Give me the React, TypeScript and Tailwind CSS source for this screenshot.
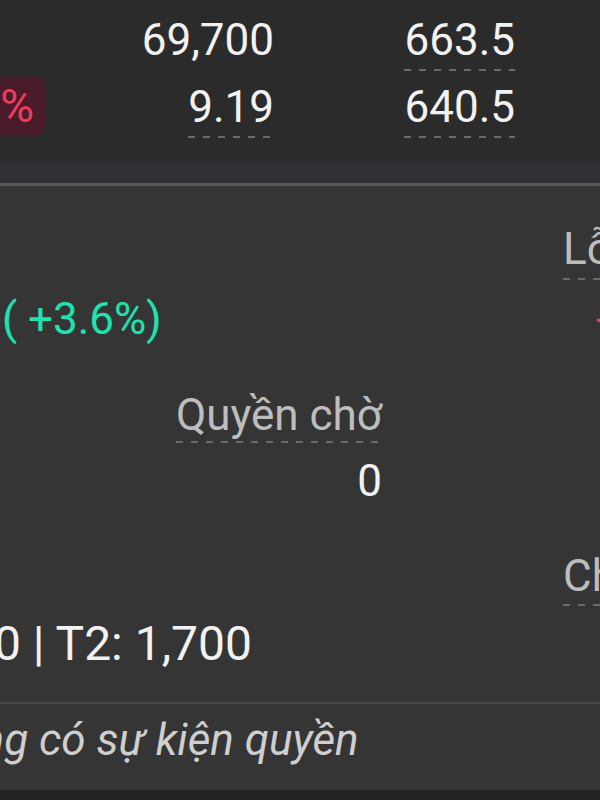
const dashed =
  "bg-[linear-gradient(to_right,#6a6a6a_7px,transparent_7px)] bg-[length:15px_2px] bg-repeat-x bg-[position:left_bottom]";

const App = () => {
  return (
    <div className="w-[600px] h-[800px] overflow-hidden bg-[#353535] font-['Roboto',sans-serif] text-[44px] leading-none text-[#f2f2f2] whitespace-nowrap">
      {/* quote rows */}
      <div className="h-[163px] bg-[#2b2b2b] pt-[18px] flex flex-col gap-[14px]">
        <div className="grid grid-cols-[274px_241px]">
          <div className="flex justify-end">
            <span className="h-[53px]">69,700</span>
          </div>
          <div className="flex justify-end">
            <span className={`h-[53px] pb-[9px] ${dashed}`}>663.5</span>
          </div>
        </div>
        <div className="grid grid-cols-[274px_241px]">
          <div className="flex justify-between items-start">
            <div className="-ml-[60px] -mt-[8px] w-[105px] h-[58px] rounded-[8px] bg-[#4a1c29] flex items-center justify-end pr-[11px] text-[46px] text-[#f23b5c]">
              1.84%
            </div>
            <span className={`h-[53px] pb-[9px] ${dashed}`}>9.19</span>
          </div>
          <div className="flex justify-end">
            <span className={`h-[53px] pb-[9px] ${dashed}`}>640.5</span>
          </div>
        </div>
      </div>
      <div className="h-[20px] bg-[#303134]" />
      <div className="h-[3px] bg-[#5a5a5a]" />

      {/* position details */}
      <div className="h-[516px] flex">
        <div className="w-[563px] shrink-0 flex flex-col">
          <span className="pt-[111px] pl-[2px] text-[#1de3b0]">( +3.6%)</span>
          <div className="w-[382px] flex justify-end mt-[52px]">
            <div className="flex flex-col items-end">
              <span className={`pb-[6px] text-[#bdbdbd] ${dashed}`}>Quyền chờ</span>
              <span className="mt-[16px]">0</span>
            </div>
          </div>
          <div className="w-[252px] flex justify-end mt-[117px] text-[48px]">
            <span>T1: 0 | T2: 1,700</span>
          </div>
        </div>
        <div className="flex-1 min-w-0 flex flex-col items-start pt-[41px]">
          <span className={`pb-[9px] text-[#bdbdbd] ${dashed}`}>Lỗ/Lãi</span>
          <span className="mt-[17px] ml-[33px] text-[#f23b5c]">-2,450</span>
          <span className={`mt-[213px] pb-[8px] text-[#bdbdbd] ${dashed}`}>Chờ về</span>
        </div>
      </div>
      <div className="h-[2px] bg-[#484848]" />

      {/* corporate actions */}
      <div className="h-[86px] pt-[14px]">
        <span className="block -ml-[94px] italic text-[#cfcfcf]">
          Không có sự kiện quyền
        </span>
      </div>
      <div className="h-[10px] bg-[#232323]" />
    </div>
  );
};

export default App;
